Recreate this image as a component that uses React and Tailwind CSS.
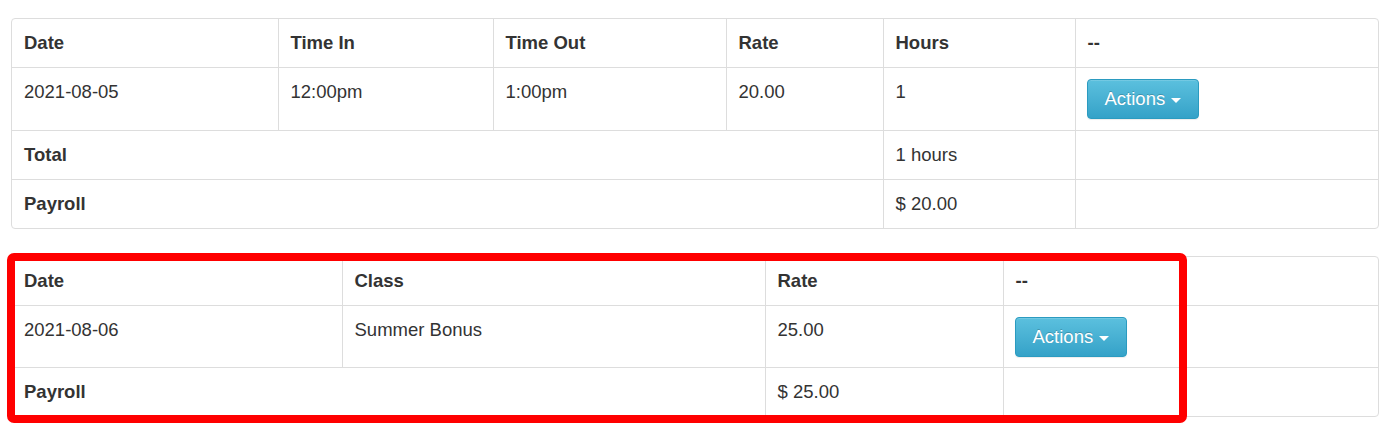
import { useState } from "react";

const cell = "border-l border-t border-[#ddd] px-3 py-3 align-top text-left";

function ActionsButton() {
  const [open, setOpen] = useState(false);
  return (
    <button
      onClick={() => setOpen(!open)}
      className="flex h-[40px] items-center gap-[6px] rounded-[4px] border border-[#2b9bc0] bg-gradient-to-b from-[#5bc0de] to-[#34a2c8] px-[17px] text-[18.5px] text-white shadow-[inset_0_1px_0_rgba(255,255,255,0.15),0_1px_1px_rgba(0,0,0,0.075)] [text-shadow:0_-1px_0_rgba(0,0,0,0.2)]"
    >
      Actions
      <span className="mt-[2px] h-0 w-0 border-x-[5px] border-t-[5px] border-x-transparent border-t-white" />
    </button>
  );
}

function Row({ children, first }) {
  return <tr className={first ? "[&>*:first-child]:border-l-0 [&>*]:border-t-0" : "[&>*:first-child]:border-l-0"}>{children}</tr>;
}

export default function App() {
  return (
    <div
      className="min-h-[430px] bg-white px-[11px] pt-[18px] text-[18.5px] leading-[24px] text-[#333]"
      style={{ fontFamily: '"Liberation Sans", Arial, sans-serif' }}
    >
      {/* Shifts table */}
      <div className="w-[1368px] overflow-hidden rounded-[4px] border border-[#ddd]">
        <table className="w-full table-fixed border-collapse">
          <colgroup>
            <col className="w-[266px]" />
            <col className="w-[215px]" />
            <col className="w-[233px]" />
            <col className="w-[157px]" />
            <col className="w-[192px]" />
            <col />
          </colgroup>
          <thead>
            <Row first>
              <th className={cell + " font-bold"}>Date</th>
              <th className={cell + " font-bold"}>Time In</th>
              <th className={cell + " font-bold"}>Time Out</th>
              <th className={cell + " font-bold"}>Rate</th>
              <th className={cell + " font-bold"}>Hours</th>
              <th className={cell + " font-bold"}>--</th>
            </Row>
          </thead>
          <tbody>
            <Row>
              <td className={cell}>2021-08-05</td>
              <td className={cell}>12:00pm</td>
              <td className={cell}>1:00pm</td>
              <td className={cell}>20.00</td>
              <td className={cell}>1</td>
              <td className="border-l border-t border-[#ddd] px-[11px] py-[11px] align-top">
                <ActionsButton />
              </td>
            </Row>
            <Row>
              <td colSpan={4} className={cell + " font-bold"}>Total</td>
              <td className={cell}>1 hours</td>
              <td className={cell}></td>
            </Row>
            <Row>
              <td colSpan={4} className={cell + " font-bold"}>Payroll</td>
              <td className={cell}>$ 20.00</td>
              <td className={cell}></td>
            </Row>
          </tbody>
        </table>
      </div>

      {/* Bonus table */}
      <div className="relative mt-[27px] w-[1368px]">
        <div className="overflow-hidden rounded-[4px] border border-[#ddd]">
          <table className="w-full table-fixed border-collapse">
            <colgroup>
              <col className="w-[330px]" />
              <col className="w-[423px]" />
              <col className="w-[238px]" />
              <col />
            </colgroup>
            <thead>
              <Row first>
                <th className={cell + " font-bold"}>Date</th>
                <th className={cell + " font-bold"}>Class</th>
                <th className={cell + " font-bold"}>Rate</th>
                <th className={cell + " font-bold"}>--</th>
              </Row>
            </thead>
            <tbody>
              <Row>
                <td className={cell}>2021-08-06</td>
                <td className={cell}>Summer Bonus</td>
                <td className={cell}>25.00</td>
                <td className="border-l border-t border-[#ddd] px-[11px] pb-[10px] pt-[11px] align-top">
                  <ActionsButton />
                </td>
              </Row>
              <Row>
                <td colSpan={2} className={cell + " font-bold"}>Payroll</td>
                <td className={cell}>$ 25.00</td>
                <td className={cell}></td>
              </Row>
            </tbody>
          </table>
        </div>
        {/* highlight box */}
        <div className="pointer-events-none absolute left-[-4px] top-[-3px] h-[170px] w-[1180px] rounded-[7px] border-[8px] border-[#ff0000]" />
      </div>
    </div>
  );
}
